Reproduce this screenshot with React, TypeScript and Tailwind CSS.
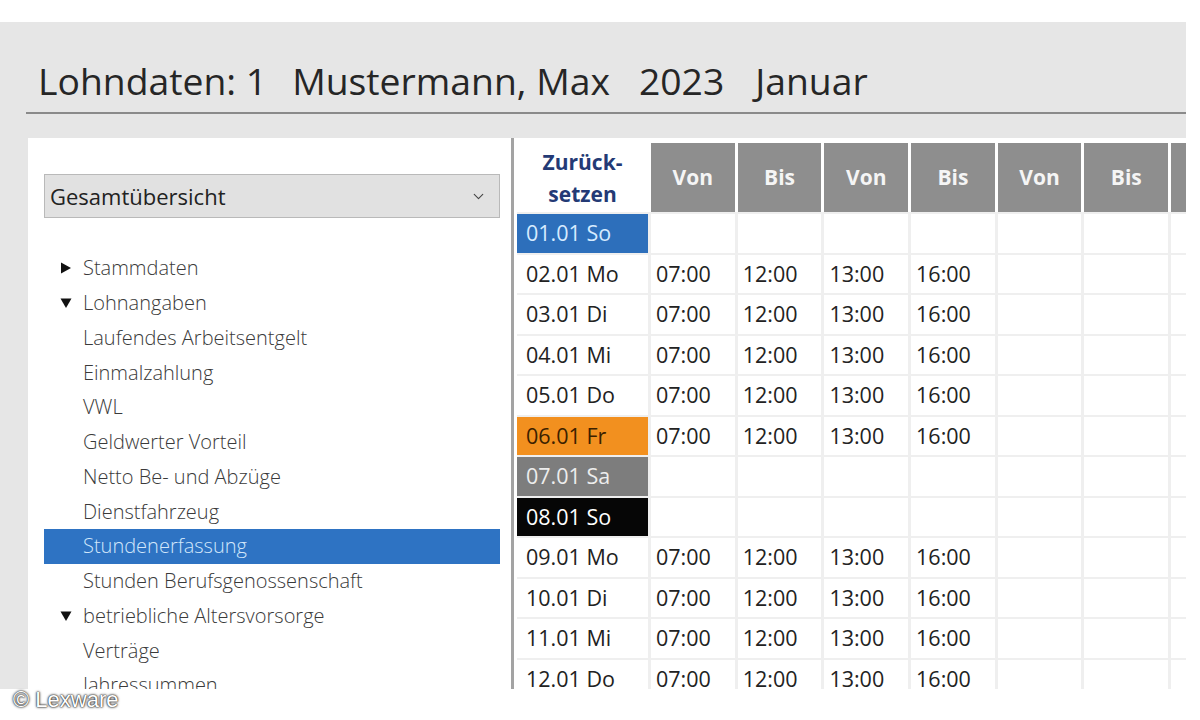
import { ChevronDown } from 'lucide-react';

type Kind = 'plain' | 'blue' | 'orange' | 'gray' | 'black';

interface DayRow {
    day: string;
    kind: Kind;
    times: boolean;
}

const days: DayRow[] = [
    { day: '01.01 So', kind: 'blue', times: false },
    { day: '02.01 Mo', kind: 'plain', times: true },
    { day: '03.01 Di', kind: 'plain', times: true },
    { day: '04.01 Mi', kind: 'plain', times: true },
    { day: '05.01 Do', kind: 'plain', times: true },
    { day: '06.01 Fr', kind: 'orange', times: true },
    { day: '07.01 Sa', kind: 'gray', times: false },
    { day: '08.01 So', kind: 'black', times: false },
    { day: '09.01 Mo', kind: 'plain', times: true },
    { day: '10.01 Di', kind: 'plain', times: true },
    { day: '11.01 Mi', kind: 'plain', times: true },
    { day: '12.01 Do', kind: 'plain', times: true },
];

const dayCellClass: Record<Kind, string> = {
    plain: 'bg-white text-[#222]',
    blue: 'bg-[#2d6fbb] text-[#d6ebff]',
    orange: 'bg-[#f2901f] text-[#3b2100]',
    gray: 'bg-[#7d7d7d] text-[#ededed]',
    black: 'bg-[#060606] text-white',
};

const headers = ['Von', 'Bis', 'Von', 'Bis', 'Von', 'Bis', 'Von'];
const times = ['07:00', '12:00', '13:00', '16:00', '', '', ''];

interface TreeItem {
    label: string;
    arrow?: 'right' | 'down';
    active?: boolean;
}

const tree: TreeItem[] = [
    { label: 'Stammdaten', arrow: 'right' },
    { label: 'Lohnangaben', arrow: 'down' },
    { label: 'Laufendes Arbeitsentgelt' },
    { label: 'Einmalzahlung' },
    { label: 'VWL' },
    { label: 'Geldwerter Vorteil' },
    { label: 'Netto Be- und Abzüge' },
    { label: 'Dienstfahrzeug' },
    { label: 'Stundenerfassung', active: true },
    { label: 'Stunden Berufsgenossenschaft' },
    { label: 'betriebliche Altersvorsorge', arrow: 'down' },
    { label: 'Verträge' },
    { label: 'Jahressummen' },
];

function Arrow({ dir }: { dir: 'right' | 'down' }) {
    return dir === 'right' ? (
        <svg width="12" height="12" viewBox="0 0 12 12">
            <path d="M1 0.5 L11 6 L1 11.5 Z" fill="#111" />
        </svg>
    ) : (
        <svg width="12" height="12" viewBox="0 0 12 12">
            <path d="M0.5 1.5 L11.5 1.5 L6 11 Z" fill="#111" />
        </svg>
    );
}

function Sidebar() {
    return (
        <div className="w-[483px] shrink-0 bg-white pt-[36px] pl-[16px] pr-[11px] flex flex-col overflow-hidden">
            <div className="h-[44px] shrink-0 bg-[#e1e1e1] border border-[#b9b9b9] flex items-center justify-between pl-[5px] pr-[12px]">
                <span className="text-[22px] text-[#222]">Gesamtübersicht</span>
                <ChevronDown size={17} strokeWidth={1.6} className="text-[#444]" />
            </div>
            <div className="mt-[33px] flex flex-col">
                {tree.map((item) => (
                    <div
                        key={item.label}
                        className={`h-[34.75px] shrink-0 flex items-center pl-[16px] ${
                            item.active ? 'bg-[#2e73c3] text-[#d2e7fb]' : 'text-[#3a3a3a]'
                        }`}
                    >
                        <span className="w-[23px] flex items-center">
                            {item.arrow && <Arrow dir={item.arrow} />}
                        </span>
                        <span className="text-[20px] font-light leading-none">{item.label}</span>
                    </div>
                ))}
            </div>
        </div>
    );
}

function TimeTable() {
    return (
        <div className="flex-1 bg-white pl-[3px] pt-[5px] overflow-hidden">
            <div className="flex gap-[3px] h-[69px] w-[700px]">
                <div className="w-[131px] shrink-0 flex flex-col items-center justify-center text-[21px] font-bold leading-[32px] text-[#243a75]">
                    <span>Zurück-</span>
                    <span>setzen</span>
                </div>
                {headers.map((h, i) => (
                    <div
                        key={i}
                        className="w-[83.7px] shrink-0 bg-[#8e8e8e] flex items-center justify-center text-[21px] font-bold text-[#f5f5f5]"
                    >
                        {h}
                    </div>
                ))}
            </div>
            {days.map((row) => (
                <div key={row.day} className="flex gap-[3px] pt-[2px] bg-[#efefef] w-[700px]">
                    <div
                        className={`w-[131px] shrink-0 h-[38.5px] flex items-center pl-[9px] text-[21.5px] ${dayCellClass[row.kind]}`}
                    >
                        {row.day}
                    </div>
                    {times.map((t, i) => (
                        <div
                            key={i}
                            className="w-[83.7px] shrink-0 h-[38.5px] bg-white flex items-center pl-[5px] text-[21.5px] text-[#222]"
                        >
                            {row.times ? t : ''}
                        </div>
                    ))}
                </div>
            ))}
        </div>
    );
}

export default function App() {
    return (
        <div className="relative w-[1200px] h-[720px] bg-white overflow-hidden font-['Open_Sans',sans-serif]">
            <div className="h-[22px]" />
            <div className="w-[1186px] h-[667px] bg-[#e6e6e6] flex flex-col overflow-hidden">
                <h1 className="pl-[38px] pt-[37px] text-[37.3px] leading-[44px] font-normal text-[#262626] whitespace-nowrap">
                    <span>Lohndaten: 1</span>
                    <span className="ml-[25px]">Mustermann, Max</span>
                    <span className="ml-[29px]">2023</span>
                    <span className="ml-[31px]">Januar</span>
                </h1>
                <div className="ml-[26px] mt-[9px] h-[2px] bg-[#8a8a8a] shrink-0" />
                <div className="ml-[28px] mt-[24px] flex flex-1 min-h-0">
                    <Sidebar />
                    <div className="w-[3px] shrink-0 bg-[#a3a3a3]" />
                    <TimeTable />
                </div>
            </div>
            <div className="absolute left-[13px] top-[683px] text-[22px] text-white font-['Liberation_Sans',sans-serif] [text-shadow:0_0_2px_#333,0_0_3px_#444,0_0_1px_#222]">
                © Lexware
            </div>
        </div>
    );
}
